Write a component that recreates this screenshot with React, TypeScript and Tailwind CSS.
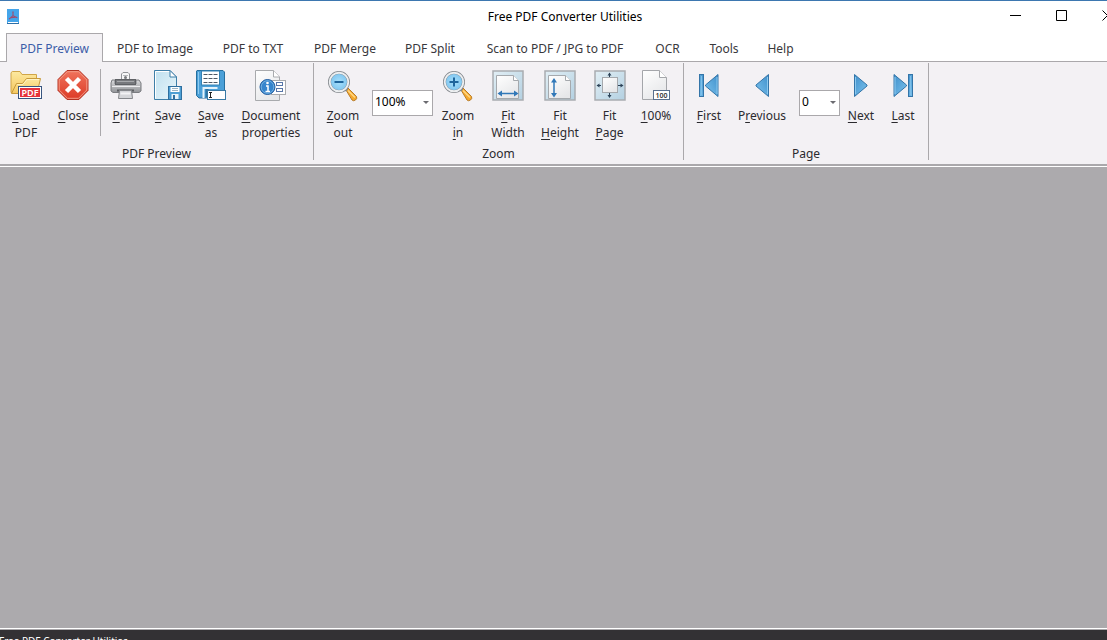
import { ReactNode, useState } from 'react';
import clsx from 'clsx';

const tabs = [
  { label: 'PDF Preview', width: 'w-[97px]' },
  { label: 'PDF to Image', width: 'w-[104px]' },
  { label: 'PDF to TXT', width: 'w-[92px]' },
  { label: 'PDF Merge', width: 'w-[92px]' },
  { label: 'PDF Split', width: 'w-[78px]' },
  { label: 'Scan to PDF / JPG to PDF', width: 'w-[172px]' },
  { label: 'OCR', width: 'w-[53px]' },
  { label: 'Tools', width: 'w-[60px]' },
  { label: 'Help', width: 'w-[53px]' },
];

function Gradients() {
  return (
    <svg width="0" height="0" className="absolute" aria-hidden="true">
      <defs>
        <linearGradient id="blue" x1="0" y1="0" x2="1" y2="1">
          <stop offset="0" stopColor="#3f8fca" />
          <stop offset="1" stopColor="#7cc4ef" />
        </linearGradient>
        <linearGradient id="sheet" x1="0" y1="0" x2="1" y2="1">
          <stop offset="0" stopColor="#bfe0ef" />
          <stop offset="1" stopColor="#eaf6fb" />
        </linearGradient>
        <linearGradient id="paper" x1="0" y1="0" x2="0.6" y2="1">
          <stop offset="0" stopColor="#ffffff" />
          <stop offset="1" stopColor="#e6e7e9" />
        </linearGradient>
        <linearGradient id="folder" x1="0" y1="0" x2="0" y2="1">
          <stop offset="0" stopColor="#fde9a0" />
          <stop offset="1" stopColor="#f4c860" />
        </linearGradient>
        <linearGradient id="frame" x1="0" y1="0" x2="1" y2="1">
          <stop offset="0" stopColor="#e2eff5" />
          <stop offset="1" stopColor="#b3d0e1" />
        </linearGradient>
        <linearGradient id="metal" x1="0" y1="0" x2="0" y2="1">
          <stop offset="0" stopColor="#d9dadc" />
          <stop offset="1" stopColor="#929498" />
        </linearGradient>
        <linearGradient id="red" x1="0" y1="0" x2="0" y2="1">
          <stop offset="0" stopColor="#f0735c" />
          <stop offset="1" stopColor="#dc3a26" />
        </linearGradient>
        <radialGradient id="glass">
          <stop offset="0" stopColor="#a8e0fb" />
          <stop offset="1" stopColor="#7cc3ee" />
        </radialGradient>
      </defs>
    </svg>
  );
}

function Icon({ children }: { children: ReactNode }) {
  return (
    <svg viewBox="0 0 32 32" className="size-8 shrink-0" aria-hidden="true">
      {children}
    </svg>
  );
}

function AppIcon() {
  return (
    <svg viewBox="0 0 12 15" className="h-[15px] w-3" aria-hidden="true">
      <rect width="12" height="15" fill="#45a5ea" />
      <rect x="1" y="13" width="10" height="1" fill="#fff" />
      <rect y="14" width="12" height="1" fill="#2c6fa8" />
      <path d="M6 2.5v4.2L2 10.2M6 6.7l4.3 2M3.6 8.8l5.2-.7M5.3 3h1.4" fill="none" stroke="#a14c6f" strokeWidth="1.1" />
    </svg>
  );
}

function LoadIcon() {
  return (
    <Icon>
      <path d="M1 22.500V2.700L2.300 1.500H10l2 3h14.500V22.500z" fill="url(#folder)" stroke="#d0a548" />
      <path d="M1.500 23.500 6.500 13.500h6l4-5h14L27 23.500z" fill="url(#folder)" stroke="#c79a3c" />
      <path d="M7.300 14.500H13l4-5h12" fill="none" stroke="#fff3c4" />
      <rect x="8.500" y="16.500" width="23" height="12" fill="#fff" stroke="#38557f" />
      <rect x="10" y="18" width="20" height="9" fill="#e5333c" />
      <text x="20" y="26" textAnchor="middle" fontSize="9" fill="#fff" fontFamily="Noto Sans, sans-serif" fontWeight="600">PDF</text>
    </Icon>
  );
}

function CloseIcon() {
  return (
    <Icon>
      <path d="M10 .500h12L31 9.500v11L22 29.500H10L1 20.500v-11z" fill="url(#red)" stroke="#b33222" />
      <path d="M10.500 1.700h11L29.800 10v10l-8.300 8.300h-11L2.200 20V10z" fill="none" stroke="#f39a86" />
      <path d="m9.500 8.500 13 13m0-13-13 13" stroke="#fff" strokeWidth="4.500" />
    </Icon>
  );
}

function PrintIcon() {
  return (
    <Icon>
      <path d="M11.500 10V4L13 2.500h5L19.500 4v6z" fill="#f7f7f8" stroke="#929498" />
      <path d="M13 5.500h5" stroke="#b6b8bb" />
      <circle cx="15.500" cy="7.500" r="1.500" fill="#77797d" />
      <path d="M2 10h3v4h21v-4h3l2 3v8l-2 1.500H3L1 21v-8z" fill="url(#metal)" stroke="#7a7c80" />
      <rect x="5.500" y="9.500" width="20" height="5" fill="#77797d" stroke="#5f6165" />
      <path d="M7 11.500h17" stroke="#a6a8ab" />
      <path d="M2 16.500h28" stroke="#ececee" />
      <path d="M7 20.500h17" stroke="#5b5d61" strokeWidth="2" />
      <path d="M9.500 20.500h12l1 8h-14z" fill="#d5d6d9" stroke="#85878b" />
      <path d="M10.500 23.500h10" stroke="#f3f3f4" strokeWidth="2" />
    </Icon>
  );
}

function SaveIcon() {
  return (
    <Icon>
      <path d="M2.500.500H18L24.500 7v22.500h-22z" fill="url(#sheet)" stroke="#3f7fa8" />
      <path d="M3.500 28.500v-27H17.500" fill="none" stroke="#fff" />
      <path d="M18 .500V7h6.500z" fill="#fff" stroke="#3f7fa8" />
      <rect x="16.500" y="16.500" width="13" height="13" fill="#4d9fd4" stroke="#2f6f9f" />
      <rect x="18.500" y="17" width="9" height="5" fill="#fff" />
      <path d="M20 18.500h6m-6 2h6" stroke="#9bb4c4" />
      <rect x="19.500" y="24" width="7" height="5" fill="#e7f3fa" />
      <rect x="21" y="25" width="2" height="4" fill="#2f6f9f" />
    </Icon>
  );
}

function SaveAsIcon() {
  return (
    <Icon>
      <path d="M2 .500h26l1.500 1.500v26H4L1.500 25.500V1z" fill="#4ba0d8" stroke="#266f9f" />
      <path d="M3.500 2v22" stroke="#8ccaf0" />
      <rect x="6.500" y="1" width="18" height="14" fill="#fff" stroke="#3582b3" />
      <path d="M8.500 4.500h14m-14 4h14m-14 4h14" stroke="#4e5965" strokeDasharray="4 1" />
      <path d="M8.500 28v-10h14" fill="none" stroke="#e5f3fb" strokeWidth="2" />
      <rect x="10.500" y="19" width="3" height="8" fill="#2b74a4" />
      <rect x="12.500" y="20.500" width="18" height="9" fill="#fff" stroke="#3879a5" />
      <path d="M14 22.500h3m-1.500 0v5m-1.500 0h3" stroke="#222" />
    </Icon>
  );
}

function PropertiesIcon() {
  return (
    <Icon>
      <path d="M.500.500h18L24.500 7v23.500H.500z" fill="url(#paper)" stroke="#a8aaad" />
      <path d="M18.500.500V7h6" fill="#fff" stroke="#a8aaad" />
      <rect x="16.500" y="10.500" width="14" height="14" fill="#fff" stroke="#a9abae" />
      <rect x="21.500" y="12.500" width="6" height="3" fill="#fff" stroke="#5876a8" />
      <rect x="21.500" y="18.500" width="6" height="3" fill="#fff" stroke="#5876a8" />
      <circle cx="12.500" cy="17" r="7.500" fill="#3685cd" stroke="#215da0" />
      <circle cx="12.500" cy="17" r="6.300" fill="none" stroke="#70afe0" />
      <circle cx="12.500" cy="13" r="1.300" fill="#fff" />
      <path d="M11 16h2v5.500m-2.500 0h4.500" fill="none" stroke="#fff" strokeWidth="1.500" />
    </Icon>
  );
}

function ZoomIcon({ plus }: { plus?: boolean }) {
  return (
    <Icon>
      <path d="m19 20 2-2 8.500 8.500q1 2-1 3.500t-3.500 0z" fill="#f6a92c" stroke="#b77c2b" />
      <path d="m21 20.500 7 7" stroke="#ffd783" strokeWidth="1.500" />
      <path d="m17 17.500 3 3" stroke="#85878a" strokeWidth="3" />
      <circle cx="12" cy="12" r="9.500" fill="url(#glass)" stroke="#83878c" strokeWidth="3" />
      <circle cx="12" cy="12" r="9.300" fill="none" stroke="#eceff1" strokeWidth="1.900" />
      <path d={plus ? 'M7.500 12h9M12 7.500v9' : 'M7.500 12h9'} stroke="#1e659c" strokeWidth="2" />
    </Icon>
  );
}

function FitFrame({ children }: { children: ReactNode }) {
  return (
    <Icon>
      <rect x="1" y="1" width="30" height="29" fill="url(#frame)" stroke="#a9acb0" strokeWidth="1.500" />
      {children}
    </Icon>
  );
}

function FitWidthIcon() {
  return (
    <FitFrame>
      <path d="M4.500 28.500v-23h17l5 5v18z" fill="url(#paper)" stroke="#a5a9ad" />
      <path d="M21.500 5.500v5h5" fill="#fff" stroke="#a5a9ad" />
      <path d="M7 23.500h18" stroke="#3078b8" strokeWidth="1.500" />
      <path d="m10 20.500-4.500 3L10 26.500zm12 0 4.500 3-4.500 3z" fill="#3078b8" />
    </FitFrame>
  );
}

function FitHeightIcon() {
  return (
    <FitFrame>
      <path d="M4.500 28.500v-23h17l5 5v18z" fill="url(#paper)" stroke="#a5a9ad" />
      <path d="M21.500 5.500v5h5" fill="#fff" stroke="#a5a9ad" />
      <path d="M10 11v13" stroke="#3078b8" strokeWidth="1.500" />
      <path d="M7 12.500 10 8l3 4.500zm0 10.500 3 4.500 3-4.500z" fill="#3078b8" />
    </FitFrame>
  );
}

function FitPageIcon() {
  return (
    <FitFrame>
      <rect x="8.500" y="7.500" width="15" height="15" fill="url(#paper)" stroke="#a5a9ad" />
      <path d="M15.500 3v4m0 16v4M3 15.500h4m17 0h4" stroke="#2d4358" />
      <path d="m13.500 5.500 2-3 2 3zm0 19.500 2 3 2-3zM5.500 13.500l-3 2 3 2zm21 0 3 2-3 2z" fill="#2d4358" />
    </FitFrame>
  );
}

function ActualSizeIcon() {
  return (
    <Icon>
      <path d="M2.500.500h17l7 7v22h-24z" fill="url(#paper)" stroke="#a4a6aa" />
      <path d="M19.500.500v7h7" fill="#fff" stroke="#a4a6aa" />
      <rect x="13.500" y="20.500" width="16" height="9" fill="#fff" stroke="#586f8e" />
      <text x="21.500" y="28" textAnchor="middle" fontSize="7" fill="#333" fontFamily="Noto Sans, sans-serif" fontWeight="600">100</text>
    </Icon>
  );
}

function ArrowIcon({ back, bar }: { back?: boolean; bar?: boolean }) {
  return (
    <Icon>
      <g transform={back ? 'matrix(-1 0 0 1 32 0)' : undefined} fill="url(#blue)" stroke="#3475a8">
        <path d={bar ? 'M7 4.500v22L19.500 16v-1z' : 'M9.500 4.500v22L22 16v-1z'} />
        <path d={bar ? 'M8 7v17' : 'M10.500 7v17'} stroke="#8cc9ef" />
        {bar && <rect x="21.500" y="4.500" width="4" height="22" />}
        {bar && <path d="M23.500 6v19" stroke="#7fbfe8" />}
      </g>
    </Icon>
  );
}

// An underscore in a line marks the letter that follows it as the shortcut key.
function Mnemonic({ text }: { text: string }) {
  const [before, rest] = text.split('_');
  return (
    <span className="block">
      {before}
      {rest && <u className="underline-offset-2">{rest.charAt(0)}</u>}
      {rest && rest.slice(1)}
    </span>
  );
}

function ToolButton({ icon, label, width }: { icon: ReactNode; label: string; width: string }) {
  return (
    <button type="button" className={clsx('flex shrink-0 flex-col items-center gap-[5px] text-center leading-[17px] hover:bg-[#e4e9f2]', width)}>
      {icon}
      <span>
        {label.split('\n').map(line => <Mnemonic key={line} text={line} />)}
      </span>
    </button>
  );
}

function Combo({ label, options, className }: { label: string; options: string[]; className: string }) {
  return (
    <div className={clsx('relative mt-5 h-[26px] shrink-0', className)}>
      <select aria-label={label} className="size-full appearance-none border border-[#aaa8ab] bg-white pb-0.5 pl-0.5 text-black outline-none">
        {options.map(option => <option key={option}>{option}</option>)}
      </select>
      <svg viewBox="0 0 6 3" className="pointer-events-none absolute top-[11px] right-1 h-[3px] w-1.5" aria-hidden="true">
        <path d="M0 0h6L3 3z" fill="#6b6b70" />
      </svg>
    </div>
  );
}

function Group({ title, children }: { title: string; children: ReactNode }) {
  return (
    <section aria-label={title} className="flex flex-col border-r border-[#aaa8ab]">
      <div className="flex h-[85px] items-start">{children}</div>
      <div className="text-center leading-3">{title}</div>
    </section>
  );
}

export default function App() {
  const [active, setActive] = useState('PDF Preview');

  return (
    <div className="flex h-screen flex-col overflow-hidden bg-white font-['Noto_Sans',sans-serif] text-[12px] text-[#2b2a2e]">
      <Gradients />
      <header className="-mr-[23px] grid h-[33px] shrink-0 grid-cols-[1fr_auto_1fr] items-center border-t border-[#3d77b0]">
        <div className="pb-0.5 pl-[7px]"><AppIcon /></div>
        <h1 className="text-black">Free PDF Converter Utilities</h1>
        <div className="flex justify-end self-start text-black">
          <button type="button" aria-label="Minimize" className="flex h-7 w-[46px] items-center justify-center">
            <svg viewBox="0 0 11 11" className="size-[11px]"><path d="M0 5.500h11" stroke="currentColor" /></svg>
          </button>
          <button type="button" aria-label="Maximize" className="flex h-7 w-[46px] items-center justify-center">
            <svg viewBox="0 0 11 11" className="size-[11px]"><path d="M.500.500h10v10H.500z" fill="none" stroke="currentColor" /></svg>
          </button>
          <button type="button" aria-label="Close window" className="flex h-7 w-[46px] items-center justify-center">
            <svg viewBox="0 0 11 11" className="size-[11px]"><path d="m.500.500 10 10m0-10-10 10" stroke="currentColor" /></svg>
          </button>
        </div>
      </header>

      <nav className="flex h-[29px] shrink-0 border-b border-[#aaa8ab] pl-1.5">
        {tabs.map(({ label, width }) => (
          <button
            key={label}
            type="button"
            onClick={() => setActive(label)}
            className={clsx(
              '-mb-px shrink-0 border border-b-0 pt-0.5 text-center whitespace-nowrap',
              width,
              label === active ? 'border-[#aaa8ab] bg-[#f3f1f4] text-[#3c5da8]' : 'border-transparent text-[#39383c]',
            )}
          >
            {label}
          </button>
        ))}
      </nav>

      <main className="flex min-h-0 flex-1 flex-col">
        <div className="flex shrink-0 border-b-2 border-[#aaa8ab] bg-[#f3f1f4] pt-px pb-1">
          <Group title="PDF Preview">
            <div className="flex pt-[7px] pl-1">
              <ToolButton icon={<LoadIcon />} label={'_Load\nPDF'} width="w-11" />
              <ToolButton icon={<CloseIcon />} label="_Close" width="w-[50px]" />
            </div>
            <div className="mt-1.5 mr-1 ml-0.5 h-[67px] w-px bg-[#aaa8ab]" />
            <div className="flex pt-[7px] pr-1">
              <ToolButton icon={<PrintIcon />} label="_Print" width="w-[42px]" />
              <ToolButton icon={<SaveIcon />} label="_Save" width="w-[42px]" />
              <ToolButton icon={<SaveAsIcon />} label={'_Save\nas'} width="w-11" />
              <ToolButton icon={<PropertiesIcon />} label={'_Document\nproperties'} width="w-[76px]" />
            </div>
          </Group>
          <Group title="Zoom">
            <div className="flex pt-[7px] pr-1 pl-[7px]">
              <ToolButton icon={<ZoomIcon />} label={'_Zoom\nout'} width="w-11" />
              <Combo label="Zoom level" options={['100%', '50%', '75%', '150%', '200%']} className="mr-[3px] ml-[7px] w-[61px]" />
              <ToolButton icon={<ZoomIcon plus />} label={'Zoom\n_in'} width="w-11" />
              <div className="flex pl-0.5">
                <ToolButton icon={<FitWidthIcon />} label={'_Fit\nWidth'} width="w-[52px]" />
                <ToolButton icon={<FitHeightIcon />} label={'Fit\n_Height'} width="w-[52px]" />
                <ToolButton icon={<FitPageIcon />} label={'Fit\n_Page'} width="w-[47px]" />
                <ToolButton icon={<ActualSizeIcon />} label="_100%" width="w-[46px]" />
              </div>
            </div>
          </Group>
          <Group title="Page">
            <div className="flex px-1 pt-[7px]">
              <ToolButton icon={<ArrowIcon back bar />} label="_First" width="w-[42px]" />
              <ToolButton icon={<ArrowIcon back />} label="P_revious" width="w-16" />
              <Combo label="Page number" options={['0']} className="ml-[5px] w-[41px]" />
              <ToolButton icon={<ArrowIcon />} label="_Next" width="w-[42px]" />
              <ToolButton icon={<ArrowIcon bar />} label="_Last" width="w-[42px]" />
            </div>
          </Group>
        </div>
        <div className="min-h-0 flex-1 border-y border-white bg-[#acaaad]" />
      </main>

      <footer className="h-[11px] shrink-0 overflow-hidden border-t border-[#aaa8ab] bg-[#333134] pt-1 text-[10px] text-white">
        <span className="-ml-px">Free PDF Converter Utilities</span>
      </footer>
    </div>
  );
}
